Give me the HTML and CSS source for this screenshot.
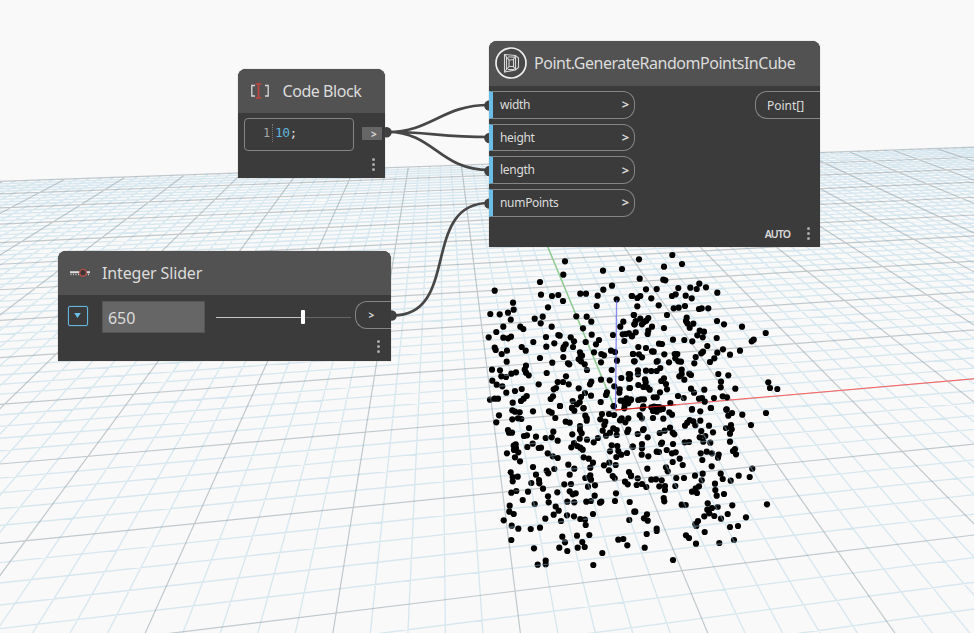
FILE: index.html
```html
<!DOCTYPE html>
<html lang="en">
<head>
<meta charset="utf-8">
<title>Random points in a cube</title>
<link rel="stylesheet" href="styles.css">
</head>
<body>
<main class="workspace">
  <svg class="viewport" viewBox="0 0 974 633" width="974" height="633" aria-hidden="true">
    <g id="below" class="points"></g>
    <path id="minor" class="grid-minor"/>
    <path id="major" class="grid-major"/>
    <path class="axis-y" d="M547.8 247L615.5 410"/>
    <path class="axis-x" d="M615.5 410L974 378.7"/>
    <g id="above" class="points"></g>
    <path class="axis-z" d="M616.6 300L615.5 410"/>
    <path class="axis-x axis-over" d="M615.5 410L676 404.7"/>
  </svg>

  <svg class="wires" viewBox="0 0 974 633" width="974" height="633" aria-hidden="true">
    <path d="M388 132C431 132 442 105 489 105M388 132C430 132 440 137 489 137M388 132C434 132 439 170 489 170M393 315.5C461 315.5 420 203 489 203"/>
    <g class="plugs">
      <circle cx="386.5" cy="132.3" r="5.3"/><circle cx="391.5" cy="315.5" r="5.3"/>
      <circle cx="489.5" cy="105.5" r="5.3"/><circle cx="489.5" cy="138" r="5.3"/>
      <circle cx="489.5" cy="171" r="5.3"/><circle cx="489.5" cy="203.5" r="5.3"/>
    </g>
  </svg>

  <section class="node code-node">
    <header class="node-head">
      <svg class="code-icon" viewBox="0 0 20 16" width="20" height="16">
        <path d="M5 2.500H1.800v10.500H5M15 2.500h3.200v10.500H15" fill="none" stroke="#d8d8d8" stroke-width="1.300"/>
        <path d="M5.500 1h6M5.500 15h6M8.500 1v14" fill="none" stroke="#c0463f" stroke-width="1.700"/>
      </svg>
      <h2>Code Block</h2>
    </header>
    <div class="code-row">
      <div class="editor"><span class="line-no">1</span><span class="code"><b>10</b>;</span></div>
      <div class="code-out">&gt;</div>
    </div>
    <div class="dots"><i></i><i></i><i></i></div>
  </section>

  <section class="node cube-node">
    <header class="node-head">
      <svg class="cube-icon" viewBox="0 0 32 32" width="32" height="32">
        <circle cx="16" cy="16" r="15" fill="#484848" stroke="#eee" stroke-width="1.700"/>
        <g fill="none" stroke="#d6d6d6" stroke-width="1.100">
          <path d="M9.500 7.500L20.500 8.500L23.500 11V20.500L20.500 23L9.500 25Z"/>
          <path d="M14 13L18.500 12.500V19.500L14 19.500ZM9.500 7.500L14 13M11.500 10V22.500M20.500 8.500L18.500 12.500M9.500 25L14 19.500M20.500 23L18.500 19.500M20.500 8.500V23M13 10H19M13 22.500H19"/>
        </g>
      </svg>
      <h2>Point.GenerateRandomPointsInCube</h2>
    </header>
    <div class="ports">
      <div class="inputs">
        <div class="port"><span>width</span><b>&gt;</b></div>
        <div class="port"><span>height</span><b>&gt;</b></div>
        <div class="port"><span>length</span><b>&gt;</b></div>
        <div class="port"><span>numPoints</span><b>&gt;</b></div>
      </div>
      <div class="output">Point[]</div>
    </div>
    <footer class="node-foot"><span>AUTO</span><div class="dots"><i></i><i></i><i></i></div></footer>
  </section>

  <section class="node slider-node">
    <header class="node-head">
      <svg class="slider-icon" viewBox="0 0 20 10" width="20" height="10">
        <path d="M0 4.200h20" stroke="#ddd" stroke-width="2"/>
        <path d="M.500 6.500h19" stroke="#ccc" stroke-width="1.500" stroke-dasharray="1 1.500"/>
        <circle cx="13" cy="4.700" r="3.300" fill="#3b3535" stroke="#b04d49" stroke-width="1.400"/>
      </svg>
      <h2>Integer Slider</h2>
    </header>
    <div class="slider-row">
      <div class="expander"><svg viewBox="0 0 8 6" width="7" height="5"><path d="M0 0h8L4 6Z" fill="#6ac0e7"/></svg></div>
      <div class="value">650</div>
      <div class="track"><span class="filled"></span><span class="thumb"></span><span class="rest"></span></div>
      <div class="slider-out">&gt;</div>
    </div>
    <div class="dots"><i></i><i></i><i></i></div>
  </section>
</main>
<script src="scene.js"></script>
</body>
</html>
```
FILE: styles.css
```css
* { box-sizing: border-box; }
body { margin: 0; overflow: hidden; background: #f9f9f9; font-family: "Noto Sans", sans-serif; color: #dcdcdc; }
.workspace { position: relative; width: 974px; height: 633px; overflow: hidden; }
.viewport, .wires { position: absolute; left: 0; top: 0; }
.grid-minor { fill: none; stroke: #a9cfe2; stroke-opacity: .42; stroke-width: 1.350; }
.grid-major { fill: none; stroke: #84959d; stroke-opacity: .48; stroke-width: 1.200; }
.axis-x { stroke: #ff6262; stroke-width: 1.100; }
.axis-over { stroke: #d62222; }
.axis-y { stroke: #8fce91; stroke-width: 1.400; }
.axis-z { stroke: #5c5ce8; stroke-opacity: .7; stroke-width: 1.300; }
.points { fill: #000; }
.wires path { fill: none; stroke: #474747; stroke-width: 2.700; }
.plugs { fill: #404040; }

.node { position: absolute; background: #3b3b3b; border-radius: 8px 8px 0 0; box-shadow: 0 0 1px #777; }
.node-head { display: flex; align-items: center; height: 44px; background: #525252; border-radius: 8px 8px 0 0; }
h2 { margin: 0; font-size: 16px; font-weight: 400; line-height: 20px; white-space: nowrap; }
.dots { display: flex; flex-direction: column; gap: 2px; width: 3px; }
.dots i { width: 3px; height: 3px; border-radius: 50%; background: #aaa; }

.code-node { left: 238px; top: 69px; width: 147px; height: 109px; }
.code-node h2 { letter-spacing: -.45px; }
.code-icon { margin: 0 12.500px 0 12px; }
.code-row { display: flex; align-items: center; gap: 8px; padding: 5px 0 0 6px; }
.editor { display: flex; align-items: center; width: 110px; height: 33px; padding: 0 0 4px 18px; border: 1px solid #858585; border-radius: 4px; font: 13px/18px "DejaVu Sans Mono", monospace; letter-spacing: -.6px; }
.line-no { width: 10px; border-right: 1px dotted #777; color: #a5a5a5; font-size: 12px; }
.code { padding-left: 2px; }
.code b { color: #5fb3dc; font-weight: 400; }
.code-out { width: 20px; height: 13px; margin-top: -3px; padding-left: 9px; background: #666; font: 700 10px/15px "Noto Sans", sans-serif; }
.code-node .dots { margin: 7px 0 0 133.500px; }

.cube-node { left: 489px; top: 41px; width: 331px; height: 206px; }
.cube-node .node-head { height: 45px; padding-bottom: 1px; }
.cube-node h2 { letter-spacing: -.48px; }
.cube-icon { margin: 0 7px 0 6px; }
.ports { display: flex; justify-content: space-between; align-items: flex-start; padding-top: 5px; }
.inputs { display: flex; flex-direction: column; gap: 5px; width: 146px; }
.port { display: flex; justify-content: space-between; align-items: center; height: 27.700px; padding: 0 5px 1px 7px; border: 1px solid #858585; border-left: 4px solid #69bde6; border-radius: 0 12px 12px 0; font-size: 12px; letter-spacing: -.3px; }
.port b { font-size: 13px; }
.output { width: 65px; height: 28px; padding-left: 11px; border: 1px solid #858585; border-right: 0; border-radius: 12px 0 0 12px; font-size: 12px; line-height: 27px; }
.node-foot { display: flex; justify-content: flex-end; align-items: center; gap: 17px; height: 16px; margin: 9px 10px 0 0; font-size: 10.500px; font-weight: 600; }
.node-foot span { letter-spacing: -.9px; }

.slider-node { left: 58px; top: 251px; width: 332.500px; height: 110px; }
.slider-node h2 { letter-spacing: -.15px; }
.slider-icon { margin: 0 12px; }
.slider-row { display: flex; align-items: center; height: 32px; margin: 6px 0 0 10px; }
.expander { display: flex; align-items: center; justify-content: center; width: 20px; height: 20px; margin: -3px 14px 0 0; border: 1.500px solid #64b8df; border-radius: 2px; box-shadow: 0 0 1px #64b8df; }
.value { width: 103px; height: 32px; padding-left: 5px; border: 1px solid #555; background: #666; font-size: 16px; line-height: 32px; }
.track { display: flex; align-items: center; width: 135px; margin: 0 4px 0 11px; }
.filled { width: 85px; height: 1px; background: #c4c4c4; }
.thumb { width: 4px; height: 14px; border-radius: 1px; background: #fff; }
.rest { flex: 1; height: 1px; background: #666; }
.slider-out { align-self: flex-start; width: 36px; height: 28px; padding-left: 13px; border: 1px solid #858585; border-right: 0; border-radius: 12px 0 0 12px; font-size: 10px; font-weight: 700; line-height: 26px; }
.slider-node .dots { margin: 7px 0 0 319px; }
```
FILE: scene.js
```js
// Camera calibration: screen x, screen y, grid index of the line crossing there.
const uSamples = [
  [374,380,-2],[332.7,633,-2],[365,432,-2],[259.3,380,-3],[145,633,-3],[144.7,380,-4],[0,575,-4],[158,361.7,-4],
  [30,380,-5],[56.7,353.3,-5],[0,408.7,-5],[480,308,-1],[496.7,425,-1],[512.3,573.3,-1],
  [548.3,248.3,0],[615.5,410,0],[681.7,570.7,0],[707.7,633,0],[776,464.7,1],[838,551.7,1],[895.3,633,1],
  [903.7,451,2],[974,524,2],[795,342.7,2],[740,287.3,2],[776.7,248.3,3],[889.7,336.7,3],[956.7,390,3],
  [820,227.3,4],[974,325,4],[820,189.3,5],[974,271.7,5]
];
const vSamples = [
  [0,543.7,-1],[490,493.7,-1],[974,444.3,-1],[173,633,-2],[490,594.3,-2],[974,535,-2],
  [0,463.3,0],[490,421.3,0],[615.5,410,0],[974,378.7,0],[0,404,1],[317,380,1],[740,347.3,1],[974,329.3,1],
  [0,358.3,2],[974,292.3,2],[974,261.7,3],[974,236.7,4],[974,215,5],[974,196.7,6],[974,181.7,7],[974,169,8],
  [0,181.7,10],[237,173.3,10],[820,152.5,10],[974,146.7,10]
];

function solve(rows) {
  const n = 8, m = Array.from({ length: n }, () => new Array(n + 1).fill(0));
  for (const r of rows) for (let i = 0; i < n; i++) for (let j = 0; j <= n; j++) m[i][j] += r[i] * r[j];
  for (let i = 0; i < n; i++) {
    let p = i;
    for (let k = i; k < n; k++) if (Math.abs(m[k][i]) > Math.abs(m[p][i])) p = k;
    [m[i], m[p]] = [m[p], m[i]];
    for (let k = 0; k < n; k++) if (k !== i) {
      const f = m[k][i] / m[i][i];
      for (let j = i; j <= n; j++) m[k][j] -= f * m[i][j];
    }
  }
  return m.map((r, i) => r[n] / r[i]);
}

// Normalised screen coordinates keep the system well conditioned.
const S = 500, rows = [];
for (const [x, y, u] of uSamples) {
  const w = y / 400, a = x / S, b = y / S;
  rows.push([a, b, 1, 0, 0, 0, -u * a, -u * b, u].map(t => t * w));
}
for (const [x, y, v] of vSamples) {
  const w = 2 * y / 400, a = x / S, b = y / S;
  rows.push([0, 0, 0, a, b, 1, -v * a, -v * b, v].map(t => t * w));
}
const g = solve(rows);

// Screen position of a grid crossing, by inverting the screen-to-plane map.
function project(u, v) {
  const a = g[0] - u * g[6], b = g[1] - u * g[7], c = u - g[2];
  const d = g[3] - v * g[6], e = g[4] - v * g[7], f = v - g[5];
  const det = a * e - b * d;
  return [(c * e - b * f) / det * S, (a * f - c * d) / det * S].map(t => t.toFixed(2)).join(" ");
}
let minor = "", major = "";
for (let i = -50; i <= 50; i++) {
  const k = i / 5;
  let d = "M" + project(k, -3.6) + "L" + project(k, 10);
  if (k >= -3.6) d += "M" + project(-10, k) + "L" + project(10, k);
  if (i % 5 === 0) major += d; else minor += d;
}
document.getElementById("minor").setAttribute("d", minor);
document.getElementById("major").setAttribute("d", major);

// Point cloud in four tiles, in thirds of a pixel; "b" marks points under the grid plane.
const tiles = [
  [480, 245, "255,49 250,89 369,77 426,72 180,111 44,137 183,149 216,153 235,150 249,168 301,146 318,146 353,152 370,134 396,122 410,163 350,183 455,153 99,173 101,194 84,203 92,224 31,207 59,208 204,187 188,215 164,221 182,235 289,214 320,215 334,230 309,250 70,245 121,245 130,252 215,245 49,261 26,277 70,278 84,280 93,275 235,270 239,272 198,276 160,291 199,305 223,295 257,298 251,306 250,312 272,277 282,289 279,306 317,291 335,269 399,270 357,285 348,298 430,230 421,245 462,210 463,238 433,288 428,268 437,267 447,265 456,274 44,308 47,315 65,327 81,317 125,306 137,317 180,339 80,350 217,353 250,336 264,355 268,358 300,322 302,331 306,332 296,343 303,349 314,358 321,375b 342,322 364,327 372,331 363,352 393,317 405,321 411,347 459,327 462,349 36,374 60,376 64,394 78,396b 94,386 108,382 138,362 134,374 138,383 146,391 200,384 176,418 37,407 50,419 67,424b 79,443 105,438 125,432 233,411 249,411 258,394 266,418 228,429 221,433 296,430 334,410 330,418 363,404 389,406 403,424 395,375 424,399 446,387b 447,401 448,429b 419,433 418,443 381,442 378,450 362,471 333,452 315,444b 303,456 30,464b 44,461 54,461 98,473 140,453 131,461 123,468 219,454 212,462 240,483 278,468b 299,472 291,478 276,489 311,489 401,483 422,467 430,467 440,460 452,464 445,475 434,480 433,490"],
  [630, 245, "27,43 127,30 156,57 102,65 29,101 100,104 106,106 48,133 80,132 145,129 181,128 200,132 208,116 228,127 262,143 6,153 22,159 31,153 64,160 126,153 137,148 167,152 185,160 22,184 86,181 131,190 146,188 165,183 207,192 215,190 235,190 111,210 11,210 14,238 17,228 31,221 36,238 42,231 49,227 55,219 66,245 170,218 168,228 172,235 179,248 190,236 261,228 282,238 336,245 407,264 371,284 365,289 17,262 5,273 55,257 53,267 102,249 209,257 222,260 202,271 218,277 129,284 163,285 187,289 260,279 232,303 25,306 48,309 87,296 96,297 66,319 71,320 9,327 27,328 36,337 14,349 103,328 134,327 142,327 136,340 145,349 153,350 117,352 80,350 84,348b 193,355 197,336 219,320 214,325 262,323 279,313 300,329 330,317 253,340 240,351 24,376 24,388b 48,377 64,378 80,378 91,369 155,374 155,387 148,394 163,404 178,386b 183,390 265,387 295,391 273,410 272,427 316,431 415,412 420,429 442,432 45,403 47,412 25,420 40,426 52,427 59,434 102,400 94,408 108,417 111,433 90,442 183,431 192,443b 223,434 144,453 161,459b 71,457 80,457 3,464 25,465 33,463 42,463 121,474 207,461 216,459 224,470 252,459 278,454 291,457 38,490 40,484 64,487 72,485 80,486 88,486 98,490 186,492 243,489 290,493 0,388 0,400 0,429"],
  [480, 405, "57,31 49,52 97,16 105,20 119,22 97,43 114,40 124,42b 159,19 207,19 215,23 226,39 240,3 276,8 283,17 310,10 257,50 269,53 316,32 320,40 320,47 401,4 366,27 387,27 402,30 361,43 376,50 373,60 425,40 445,40 436,52 420,46 147,69 84,75 87,83 96,83 132,93 141,91 168,95 197,99b 215,97 220,80 233,107 158,116b 142,126 107,118 101,122 108,129 102,135 115,142 105,157 120,169 81,145 176,129 183,128 203,145 218,154b 233,159 277,88 300,63b 300,75 305,85 299,101 321,104b 282,114b 274,127 292,123 301,128 308,134 354,99b 341,112 368,77 378,92b 390,83 400,70 410,75 410,90b 445,74 442,81 395,121 412,123 390,139b 415,138 424,149 409,156 441,144 458,125b 311,157 326,161 339,173 331,188b 372,181 388,173b 407,180b 387,196 398,213 404,220b 447,201 453,212 435,230 443,238 159,186 168,209 200,197b 205,205 223,192b 265,179 283,191b 269,209 92,202 98,216 113,215 98,229 177,225 178,235 189,251 154,234b 144,260 94,263 109,258b 253,238 273,237b 316,219b 331,211 333,224 324,245b 345,241 232,262 204,274 206,292 269,259 278,268 287,265 262,290b 283,292b 319,290 333,288b 344,272 360,293 364,290 408,265 405,288 449,291 128,285 164,297b 89,302 88,320 101,327 227,305 236,317 221,329 196,341 261,331b 282,334 243,348b 301,342 315,344b 317,360 339,327 71,346 95,362b 115,371 152,372 180,368 94,405 448,345b 463,320 247,395 255,412b 238,428 262,438 291,392 328,390 307,411 293,428 314,426 162,430 367,444 415,404 430,402 442,421 173,479b 197,467 197,478b 340,480"],
  [630, 405, "186,14 211,19 242,9 289,14 306,24 295,32 337,29 408,24 363,60 29,30 36,40b 69,18 80,20 90,14 98,12 69,39 100,41 118,22 126,29 179,45 172,53 165,62 190,49 196,61b 211,47 237,62 249,82 214,78 41,72 39,75 23,87b 53,97 89,84b 104,77b 120,68 128,83 133,88 303,60 288,69b 305,73 300,86 300,110 209,97 226,93b 220,110b 241,113b 164,112b 177,111b 96,113 93,117b 129,117 36,117 36,130b 35,149 8,125b 55,154 80,140 87,141b 110,135 126,145 137,142 149,161 128,171 158,180 212,145 230,140 246,145b 266,149 264,158b 217,165 315,132 309,138 318,148 245,184 367,191b 359,216 326,212 302,227b 272,206 278,222 52,191 108,187b 113,199b 3,212 23,220b 64,224 78,223 95,226 139,219 162,219 195,212 218,206 215,226b 255,236 256,255 20,240 36,237 49,246b 88,244 105,243 105,255 136,243b 207,244 197,250 186,260 201,264 260,272 282,267 101,279 103,289 155,299b 167,300b 233,295 232,314 246,309 263,306b 307,301 411,298 293,327 273,341b 223,334 238,325 253,333 348,337 300,366 324,363 16,320 51,328 42,340 53,347 204,348 196,357b 199,363b 80,371 80,378b 50,387 224,381 168,391 177,399 198,416 268,414b 312,405b 44,428 129,465"]
];
for (const [ox, oy, text] of tiles) {
  for (const item of text.split(" ")) {
    const [x, y] = item.split(",").map(parseFloat);
    const dot = document.createElementNS("http://www.w3.org/2000/svg", "circle");
    dot.setAttribute("cx", (ox + x / 3).toFixed(1));
    dot.setAttribute("cy", (oy + y / 3).toFixed(1));
    dot.setAttribute("r", "3.1");
    document.getElementById(item.endsWith("b") ? "below" : "above").appendChild(dot);
  }
}
```
